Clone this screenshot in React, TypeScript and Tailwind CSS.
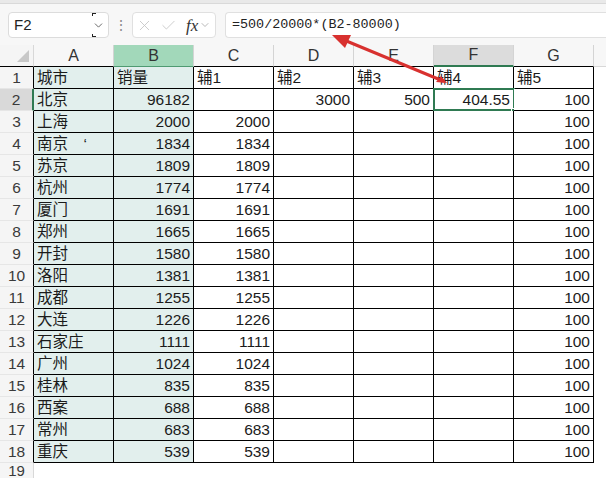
import { Fragment } from "react"
import { ChevronDown, X, Check } from "lucide-react"

type Row = [string, string, string, string, string, string, string]

const data: Row[] = [
  ["城市", "销量", "辅1", "辅2", "辅3", "辅4", "辅5"],
  ["北京", "96182", "", "3000", "500", "404.55", "100"],
  ["上海", "2000", "2000", "", "", "", "100"],
  ["南京\u3000‘", "1834", "1834", "", "", "", "100"],
  ["苏京", "1809", "1809", "", "", "", "100"],
  ["杭州", "1774", "1774", "", "", "", "100"],
  ["厦门", "1691", "1691", "", "", "", "100"],
  ["郑州", "1665", "1665", "", "", "", "100"],
  ["开封", "1580", "1580", "", "", "", "100"],
  ["洛阳", "1381", "1381", "", "", "", "100"],
  ["成都", "1255", "1255", "", "", "", "100"],
  ["大连", "1226", "1226", "", "", "", "100"],
  ["石家庄", "1111", "1111", "", "", "", "100"],
  ["广州", "1024", "1024", "", "", "", "100"],
  ["桂林", "835", "835", "", "", "", "100"],
  ["西案", "688", "688", "", "", "", "100"],
  ["常州", "683", "683", "", "", "", "100"],
  ["重庆", "539", "539", "", "", "", "100"],
]

const letters = ["A", "B", "C", "D", "E", "F", "G"]

const isNum = (s: string) => /^[0-9.]+$/.test(s)

export default function App() {
  return (
    <div
      className="relative w-[606px] h-[478px] overflow-hidden bg-white text-[#1b1b1b] flex flex-col"
      style={{ fontFamily: "'Liberation Sans', 'Noto Sans CJK SC', sans-serif" }}
    >
      {/* top strip */}
      <div className="shrink-0 h-[4px] bg-[#e9e9e9] border-b border-[#d9d9d9]" />

      {/* formula bar */}
      <div className="shrink-0 h-[41px] bg-[#f7f7f7] flex items-start pt-[8px] pl-[8px]">
        <div className="relative w-[101px] h-[26px] bg-white border border-[#dcdcdc] rounded-[4px] flex items-center pl-[5px] text-[15px] text-[#222]">
          F2
          <div className="absolute left-[83px] top-0 w-[4px] h-[3px] border-l border-t border-[#222]" />
          <div className="absolute left-[83px] bottom-0 w-[4px] h-[3px] border-l border-b border-[#222]" />
          <ChevronDown className="absolute right-[3px] top-[6px] text-[#555]" size={13} strokeWidth={1.6} />
        </div>
        <div className="w-[23px] h-[26px] flex items-center justify-center text-[#8a8a8a] text-[14px] leading-none">⋮</div>
        <div className="w-[84px] h-[26px] bg-white border border-[#e0e0e0] rounded-[4px] flex items-center pl-[3px]">
          <X size={17} strokeWidth={1.2} className="text-[#c4c4c4]" />
          <Check size={17} strokeWidth={1.2} className="text-[#c4c4c4] ml-[7px]" />
          <span
            className="ml-[9px] text-[17px] italic text-[#333] leading-none"
            style={{ fontFamily: "'Liberation Serif', serif" }}
          >
            fx
          </span>
          <ChevronDown size={12} strokeWidth={1.4} className="text-[#999] ml-[1px]" />
        </div>
        <div
          className="ml-[9px] flex-1 h-[26px] bg-white border-y border-l border-[#e0e0e0] rounded-l-[4px] flex items-center pl-[6px] text-[13.4px] text-[#222]"
          style={{ fontFamily: "'Liberation Mono', monospace" }}
        >
          =500/20000*(B2-80000)
        </div>
      </div>

      {/* sheet */}
      <div className="flex-1 min-h-0 grid grid-cols-[34px_repeat(7,80px)_1fr] grid-rows-[22px_repeat(18,22px)_1fr] bg-white">
        {/* header row */}
        <div className="relative bg-[#f5f5f5] border-r border-[#d8d8d8] border-b border-b-black">
          <div className="absolute right-[4px] bottom-[4px] w-0 h-0 border-l-[12px] border-l-transparent border-b-[12px] border-b-[#c8c8c8]" />
        </div>
        {letters.map((l) => (
          <div
            key={l}
            className={
              "flex items-center justify-center text-[16px] text-[#333] border-r border-[#d4d4d4] " +
              (l === "B"
                ? "bg-[#a2d8ba] border-b border-b-[#4f9a72]"
                : l === "F"
                ? "bg-[#dcdcdc] border-b-2 border-b-[#2f7a52]"
                : "bg-[#f7f7f7] border-b border-b-black")
            }
          >
            {l}
          </div>
        ))}
        <div className="bg-[#f7f7f7] border-b border-[#d8d8d8]" />

        {/* data rows */}
        {data.map((row, r) => (
          <Fragment key={r}>
            <div
              className={
                "flex items-center justify-center text-[15.5px] text-[#3a3a3a] border-b border-[#e6e6e6] " +
                (r === 1 ? "bg-[#d9d9d9] border-r-2 border-r-[#2f7a52]" : "bg-[#f5f5f5] border-r border-r-black")
              }
            >
              {r + 1}
            </div>
            {row.map((v, c) => (
              <div
                key={c}
                className={
                  "relative flex items-center px-[3px] text-[15.5px] border-r border-b border-black whitespace-nowrap " +
                  (isNum(v) ? "justify-end " : "justify-start ") +
                  (c < 2 ? "bg-[#e2efed]" : "bg-white")
                }
              >
                {v}
                {r === 1 && c === 5 && (
                  <>
                    <div className="absolute -left-[1px] -top-[1px] w-[82px] h-[23px] border-2 border-[#2f7a52]" />
                    <div className="absolute -right-[4px] -bottom-[4px] w-[6px] h-[6px] bg-[#2f7a52] border border-white" />
                  </>
                )}
              </div>
            ))}
            <div className="bg-white" />
          </Fragment>
        ))}

        {/* row 19 */}
        <div className="flex items-start justify-center pt-[1px] text-[15px] leading-[14px] text-[#3a3a3a] bg-[#f5f5f5] border-r border-[#d8d8d8]">
          19
        </div>
        {letters.map((l) => (
          <div key={"r19" + l} className="bg-white" />
        ))}
        <div className="bg-white" />
      </div>

      {/* red arrow annotation */}
      <svg className="absolute left-0 top-0 pointer-events-none" width="606" height="478">
        <line x1="443" y1="81" x2="344" y2="40" stroke="#d8312f" strokeWidth="3" strokeLinecap="round" />
        <polygon points="332,35 351,35 345,48" fill="#d8312f" />
        <polygon points="447,83 436,82 441,76" fill="#d8312f" />
      </svg>
    </div>
  )
}
